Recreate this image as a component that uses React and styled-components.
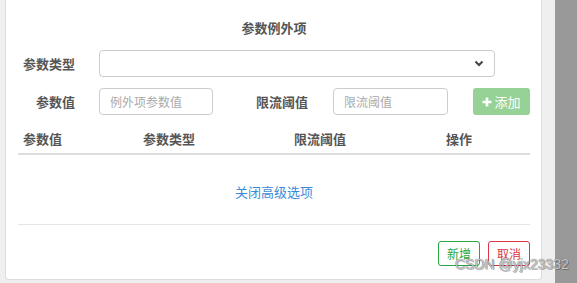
import React from "react";
import styled, { createGlobalStyle } from "styled-components";

const Global = createGlobalStyle`
  html, body { margin: 0; padding: 0; }
  body {
    background: #efefef;
    font-family: "Noto Sans CJK SC", "Noto Sans", sans-serif;
    width: 577px;
    height: 283px;
    overflow: hidden;
  }
  #root { height: 283px; }
`;

const Page = styled.div`
  position: relative;
  display: flex;
  height: 283px;
  padding-left: 5px;
  box-sizing: border-box;
`;

const Card = styled.div`
  width: 537px;
  height: 280px;
  box-sizing: border-box;
  background: #fff;
  border: 1px solid #dcdcdc;
  border-top: none;
  border-radius: 0 0 4px 4px;
  padding: 19px 11px 0 12px;
  display: flex;
  flex-direction: column;
`;

const Gutter = styled.div`
  width: 13px;
  flex: none;
`;

const Backdrop = styled.div`
  flex: 1;
  background: #999999;
`;

const Title = styled.div`
  text-align: center;
  font-size: 13px;
  line-height: 18px;
  font-weight: bold;
  color: #555;
`;

const FormRow = styled.div`
  display: flex;
  align-items: center;
  height: 27px;
  margin-top: ${(p) => p.$top}px;
`;

const Label = styled.label`
  width: ${(p) => p.$w}px;
  flex: none;
  text-align: right;
  font-size: 13px;
  font-weight: bold;
  color: #555;
  margin-right: ${(p) => p.$gap}px;
`;

const Field = styled.div`
  box-sizing: border-box;
  width: ${(p) => p.$w}px;
  height: 27px;
  border: 1px solid #ccc;
  border-radius: 4px;
  padding: 0 10px;
  display: flex;
  align-items: center;
  justify-content: space-between;
  font-size: 12px;
  color: #aaa;
  flex: none;
`;

const AddButton = styled.button`
  margin-left: 25px;
  box-sizing: border-box;
  width: 58px;
  height: 27px;
  border: none;
  border-radius: 3px;
  background: #96d296;
  color: #fff;
  font-family: inherit;
  font-size: 13px;
  display: flex;
  align-items: center;
  justify-content: center;
  gap: 2px;
  padding: 0;
`;

const TableHead = styled.div`
  display: grid;
  grid-template-columns: 120px 151px 152px 1fr;
  margin-top: 7px;
  border-bottom: 2px solid #dddddd;
`;

const HeadCell = styled.div`
  padding: 8px 5px 5px;
  font-size: 13px;
  line-height: 18px;
  font-weight: bold;
  color: #555;
`;

const LinkRow = styled.div`
  text-align: center;
  margin-top: 28px;
  font-size: 13px;
  line-height: 18px;
`;

const Link = styled.a`
  color: #3b8ad5;
  text-decoration: none;
`;

const Divider = styled.div`
  height: 1px;
  background: #e5e5e5;
  margin-top: 23px;
`;

const Footer = styled.div`
  display: flex;
  justify-content: flex-end;
  gap: 8px;
  margin-top: 16px;
`;

const OutlineButton = styled.button`
  box-sizing: border-box;
  width: 42px;
  height: 25px;
  padding: 0;
  border: 1px solid ${(p) => p.$color};
  color: ${(p) => p.$color};
  background: #fff;
  border-radius: 3px;
  font-family: inherit;
  font-size: 12px;
`;

const Watermark = styled.div`
  position: absolute;
  left: 455px;
  top: 256px;
  font-family: "Liberation Sans", Arial, sans-serif;
  font-size: 14px;
  color: #c8c8c8;
  text-shadow: 0 0 1px #555, 1px 1px 0 rgba(0,0,0,0.25);
  letter-spacing: 0;
  pointer-events: none;
`;

function Chevron() {
  return (
    <svg width="10" height="7" viewBox="0 0 10 7">
      <path d="M1.5 1.5 L5 5 L8.5 1.5" fill="none" stroke="#444" strokeWidth="2" />
    </svg>
  );
}

function Plus() {
  return (
    <svg width="10" height="10" viewBox="0 0 10 10">
      <path d="M5 0.5 V9.5 M0.5 5 H9.5" stroke="#fff" strokeWidth="2.6" />
    </svg>
  );
}

export default function App() {
  return (
    <>
      <Global />
      <Page>
        <Card>
          <Title>参数例外项</Title>
          <FormRow $top={13}>
            <Label $w={57} $gap={24}>参数类型</Label>
            <Field $w={396}>
              <span />
              <Chevron />
            </Field>
          </FormRow>
          <FormRow $top={11}>
            <Label $w={57} $gap={24}>参数值</Label>
            <Field $w={114}>例外项参数值</Field>
            <Label $w={95} $gap={25}>限流阈值</Label>
            <Field $w={115}>限流阈值</Field>
            <AddButton>
              <Plus />
              添加
            </AddButton>
          </FormRow>
          <TableHead>
            <HeadCell>参数值</HeadCell>
            <HeadCell>参数类型</HeadCell>
            <HeadCell>限流阈值</HeadCell>
            <HeadCell>操作</HeadCell>
          </TableHead>
          <LinkRow>
            <Link href="#">关闭高级选项</Link>
          </LinkRow>
          <Divider />
          <Footer>
            <OutlineButton $color="#28a745">新增</OutlineButton>
            <OutlineButton $color="#dc3545">取消</OutlineButton>
          </Footer>
        </Card>
        <Gutter />
        <Backdrop />
        <Watermark>CSDN @yjx23332</Watermark>
      </Page>
    </>
  );
}
